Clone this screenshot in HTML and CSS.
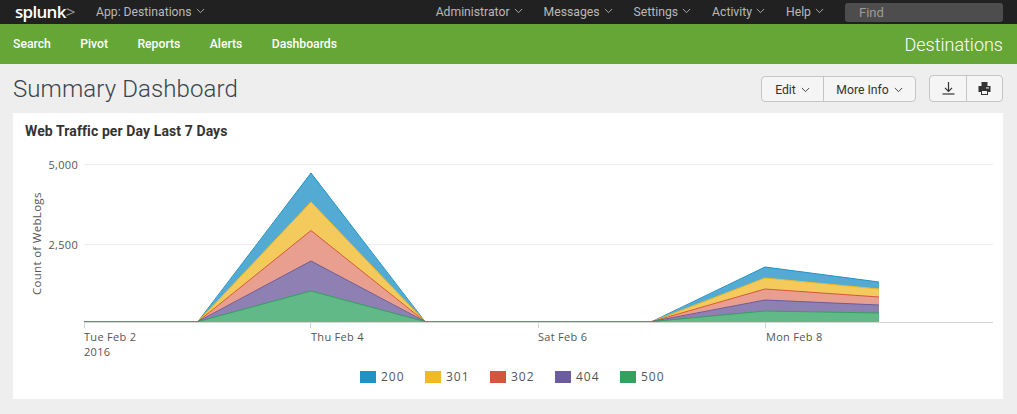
FILE: index.html
```html
<!DOCTYPE html>
<html lang="en">
<head>
  <meta charset="UTF-8">
  <title>Summary Dashboard</title>
  <link rel="stylesheet" href="styles.css">
</head>
<body>
  <svg class="defs" width="0" height="0">
    <symbol id="chev" viewBox="0 0 10 6"><path d="M1 .8 5 4.8 9 .8" fill="none" stroke="currentColor" stroke-width="1"/></symbol>
  </svg>

  <div class="topbar">
    <div class="logo">splunk<span class="logo-gt">&gt;</span></div>
    <div class="top-item app-menu">App: Destinations <svg class="chev"><use href="#chev"/></svg></div>
    <div class="top-right">
      <div class="top-item">Administrator <svg class="chev"><use href="#chev"/></svg></div>
      <div class="top-item">Messages <svg class="chev"><use href="#chev"/></svg></div>
      <div class="top-item">Settings <svg class="chev"><use href="#chev"/></svg></div>
      <div class="top-item">Activity <svg class="chev"><use href="#chev"/></svg></div>
      <div class="top-item">Help <svg class="chev"><use href="#chev"/></svg></div>
      <div class="find">Find</div>
    </div>
  </div>

  <div class="navbar">
    <div class="nav-links">
      <span>Search</span>
      <span>Pivot</span>
      <span>Reports</span>
      <span>Alerts</span>
      <span>Dashboards</span>
    </div>
    <div class="app-name">Destinations</div>
  </div>

  <div class="page-head">
    <h1>Summary Dashboard</h1>
    <div class="actions">
      <div class="btn-group">
        <div class="btn btn-edit">Edit <svg class="chev"><use href="#chev"/></svg></div>
        <div class="btn btn-more">More Info <svg class="chev"><use href="#chev"/></svg></div>
      </div>
      <div class="btn-group icons">
        <div class="btn btn-icon">
          <svg width="13" height="13" viewBox="0 0 13 13"><path d="M6.500 0v9M3 5.800l3.500 3.600L10 5.800" fill="none" stroke="#333" stroke-width="1.200"/><path d="M.5 12h12" stroke="#333" stroke-width="1.200"/></svg>
        </div>
        <div class="btn btn-icon">
          <svg width="13" height="13" viewBox="0 0 13 13"><path d="M3.500 0h6v4h3v6h-2.500v3h-7v-3H.5V4h3z" fill="#333"/><path d="M4 9h5v3H4z" fill="#f5f5f5"/><path d="M8 5.300h3v1.200H8z" fill="#ddd"/></svg>
        </div>
      </div>
    </div>
  </div>

  <div class="panel">
    <h2>Web Traffic per Day Last 7 Days</h2>
    <svg class="chart" width="990" height="214" viewBox="13 146 990 214">
      <path class="grid" d="M84 164.500H993M84 244.500H993"/>
      <g class="areas">
        <path class="a200" d="M198 322 311 173 425 322 652 322 765 267 879 282V322Z"/>
        <path class="a301" d="M198 322 311 202 425 322 652 322 765 278 879 289V322Z"/>
        <path class="a302" d="M198 322 311 230.500 425 322 652 322 765 289 879 297V322Z"/>
        <path class="a404" d="M198 322 311 261 425 322 652 322 765 300 879 305V322Z"/>
        <path class="a500" d="M198 322 311 291 425 322 652 322 765 311 879 313V322Z"/>
      </g>
      <g class="lines">
        <path class="s200" d="M84 321.500H198L311 173 425 321.500H652L765 267 879 282"/>
        <path class="s301" d="M198 321.500 311 202 425 321.500M652 321.500 765 278 879 289"/>
        <path class="s302" d="M198 321.500 311 230.500 425 321.500M652 321.500 765 289 879 297"/>
        <path class="s404" d="M198 321.500 311 261 425 321.500M652 321.500 765 300 879 305"/>
        <path class="s500" d="M198 321.500 311 291 425 321.500M652 321.500 765 311 879 313"/>
      </g>
      <path class="baseline" d="M84 321.500H198M425 321.500H652"/>
      <path class="axis" d="M84 322.500H993M84.500 322V328M310.500 322V328M538.500 322V328M765.500 322V328"/>
      <g class="labels">
        <text x="78" y="169" text-anchor="end">5,000</text>
        <text x="78" y="249" text-anchor="end">2,500</text>
        <text x="84" y="341">Tue Feb 2</text>
        <text x="84" y="356">2016</text>
        <text x="311" y="341">Thu Feb 4</text>
        <text x="538" y="341">Sat Feb 6</text>
        <text x="766" y="341">Mon Feb 8</text>
        <text class="y-title" transform="translate(41 295) rotate(-90)">Count of WebLogs</text>
      </g>
    </svg>
    <div class="legend">
      <div class="legend-item"><i class="swatch c200"></i>200</div>
      <div class="legend-item"><i class="swatch c301"></i>301</div>
      <div class="legend-item"><i class="swatch c302"></i>302</div>
      <div class="legend-item"><i class="swatch c404"></i>404</div>
      <div class="legend-item"><i class="swatch c500"></i>500</div>
    </div>
  </div>
</body>
</html>
```

FILE: styles.css
```css
body {
  margin: 0;
  font-family: 'Roboto', sans-serif;
  background-color: #eeeeee;
  color: #333;
  height: 414px;
  overflow: hidden;
}
.defs {
  display: block;
  height: 0;
}
.chev {
  width: 9px;
  height: 6px;
  margin-left: 1px;
  vertical-align: 2px;
}
.topbar {
  height: 24px;
  background-color: #212121;
  display: flex;
  align-items: center;
  color: #b9b9b9;
  font-size: 12.200px;
}
.logo {
  margin-left: 15px;
  width: 81px;
  color: #fff;
  font-family: 'Open Sans', sans-serif;
  font-weight: 600;
  font-size: 17px;
  letter-spacing: -0.7px;
  line-height: 24px;
}
.logo-gt {
  color: #9a9a9a;
  font-weight: 400;
}
.top-right {
  margin-left: auto;
  display: flex;
  align-items: center;
  margin-right: 14px;
}
.top-item {
  white-space: nowrap;
}
.top-right .top-item {
  margin-right: 21px;
}
.find {
  width: 144px;
  height: 19px;
  line-height: 20px;
  padding-left: 14px;
  background-color: #4d4d4d;
  border-radius: 3px;
  color: #9c9c9c;
  font-size: 13px;
}
.navbar {
  height: 40px;
  background-color: #65a637;
  color: #fff;
  display: flex;
  align-items: center;
  justify-content: space-between;
  padding: 0 14px 0 13px;
}
.nav-links {
  display: flex;
  gap: 29.400px;
  font-size: 12.200px;
  font-weight: 500;
}
.app-name {
  font-size: 18px;
  font-weight: 300;
}
.page-head {
  height: 49px;
  display: flex;
  align-items: center;
  justify-content: space-between;
  padding: 0 14px 0 13px;
}
h1 {
  margin: 0;
  font-size: 24px;
  font-weight: 300;
  letter-spacing: 0.1px;
  color: #3c444d;
}
.actions {
  display: flex;
  gap: 13px;
}
.btn-group {
  display: flex;
  height: 24px;
  border: 1px solid #c5c5c5;
  border-radius: 4px;
  background-color: #f5f5f5;
  font-size: 12.200px;
  color: #333;
  margin-top: 1px;
}
.btn-group.icons {
  height: 25px;
  margin-top: 0;
}
.btn {
  display: flex;
  align-items: center;
  justify-content: center;
  gap: 4px;
}
.btn + .btn {
  border-left: 1px solid #c5c5c5;
}
.btn-edit {
  width: 61px;
  padding-top: 1px;
}
.btn-more {
  width: 91px;
  padding-top: 1px;
}
.btn-icon {
  width: 36px;
}
.btn-icon + .btn-icon {
  width: 35px;
}
.panel {
  margin: 0 14px 0 13px;
  height: 286px;
  background-color: #fff;
}
h2 {
  margin: 0;
  padding: 10px 12px 0;
  height: 23px;
  font-size: 14px;
  font-weight: 700;
  letter-spacing: 0.1px;
  line-height: 17px;
  color: #333;
}
.chart {
  display: block;
}
.grid {
  fill: none;
  stroke: #ececec;
}
.a200 { fill: #53abd3; }
.a301 { fill: #f5ca5d; }
.a302 { fill: #e89f90; }
.a404 { fill: #8e80b3; }
.a500 { fill: #60b986; }
.lines path {
  fill: none;
}
.s200 { stroke: #1e93c6; }
.s301 { stroke: #f2b827; }
.s302 { stroke: #d6563c; }
.s404 { stroke: #6a5c9e; }
.s500 { stroke: #31a35f; }
.baseline {
  fill: none;
  stroke: #6f8a78;
}
.axis {
  fill: none;
  stroke: #d5d5d5;
}
.labels text {
  font-family: 'Open Sans', sans-serif;
  font-size: 11px;
  letter-spacing: 0.3px;
  fill: #555;
}
.labels .y-title {
  font-size: 11.500px;
}
.legend {
  display: flex;
  justify-content: center;
  gap: 24px;
  padding: 8px 0 0 5px;
  font-family: 'Open Sans', sans-serif;
  font-size: 12px;
  letter-spacing: 1px;
  color: #555;
}
.legend-item {
  display: flex;
  align-items: center;
  gap: 5px;
  width: 41px;
  white-space: nowrap;
}
.swatch {
  flex: none;
  width: 16px;
  height: 12px;
}
.c200 { background-color: #1e93c6; }
.c301 { background-color: #f2b827; }
.c302 { background-color: #d6563c; }
.c404 { background-color: #6a5c9e; }
.c500 { background-color: #31a35f; }
```
